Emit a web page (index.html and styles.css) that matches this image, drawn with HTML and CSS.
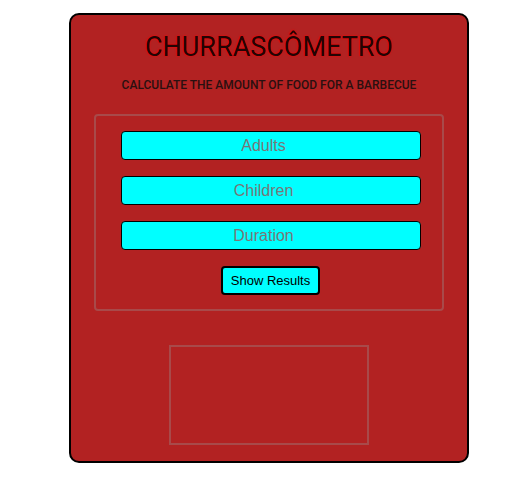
FILE: index.html
```html
<!DOCTYPE html>
<html>
<head>
<meta charset="utf-8">
<link rel="stylesheet" href="styles.css">
</head>
<body>
<div class="card">
  <h1 class="title">CHURRASCÔMETRO</h1>
  <p class="subtitle">CALCULATE THE AMOUNT OF FOOD FOR A BARBECUE</p>
  <div class="form">
    <input class="field" type="number" placeholder="Adults">
    <input class="field" type="number" placeholder="Children">
    <input class="field" type="number" placeholder="Duration">
    <button class="btn">Show Results</button>
  </div>
  <div class="result"></div>
</div>
</body>
</html>
```
FILE: styles.css
```css
body {
  margin: 8px;
  background: #fff;
  font-family: "Liberation Sans", Arial, sans-serif;
}
.card {
  margin: 5px 0 0 61px;
  width: 396px;
  height: 446px;
  border: 2px solid #000;
  border-radius: 10px;
  background: #b22222;
  display: flex;
  flex-direction: column;
  align-items: center;
}
.title {
  margin: 16px 0 0;
  font-family: Roboto, sans-serif;
  font-weight: 400;
  font-size: 27px;
  line-height: 33px;
  color: #220404;
  text-shadow: 0 0 2px #ff0000, 0 0 1px #ff0000;
}
.subtitle {
  margin: 14px 0 0;
  font-family: Roboto, sans-serif;
  font-weight: 500;
  font-size: 12px;
  line-height: 14px;
  color: #2a1010;
}
.form {
  margin-top: 22px;
  box-sizing: border-box;
  width: 350px;
  height: 197px;
  border: 2px solid rgba(150, 150, 150, 0.35);
  border-radius: 4px;
  display: flex;
  flex-direction: column;
  align-items: center;
  padding-top: 15px;
  gap: 16px;
}
.field {
  box-sizing: border-box;
  width: 300px;
  height: 29px;
  margin: 0 0 0 4px;
  padding: 0;
  border: 1px solid #000;
  border-radius: 4px;
  background: #00ffff;
  font-family: "Liberation Sans", Arial, sans-serif;
  font-size: 16px;
  text-align: center;
  outline: none;
}
.field::placeholder {
  color: #777;
}
.btn {
  box-sizing: border-box;
  width: 99px;
  height: 29px;
  margin-left: 3px;
  padding: 0;
  border: 2px solid #000;
  border-radius: 4px;
  background: #00ffff;
  font-family: "Liberation Sans", Arial, sans-serif;
  font-size: 13px;
  color: #000;
}
.result {
  margin-top: 34px;
  box-sizing: border-box;
  width: 200px;
  height: 100px;
  border: 2px solid rgba(150, 150, 150, 0.35);
}
```
